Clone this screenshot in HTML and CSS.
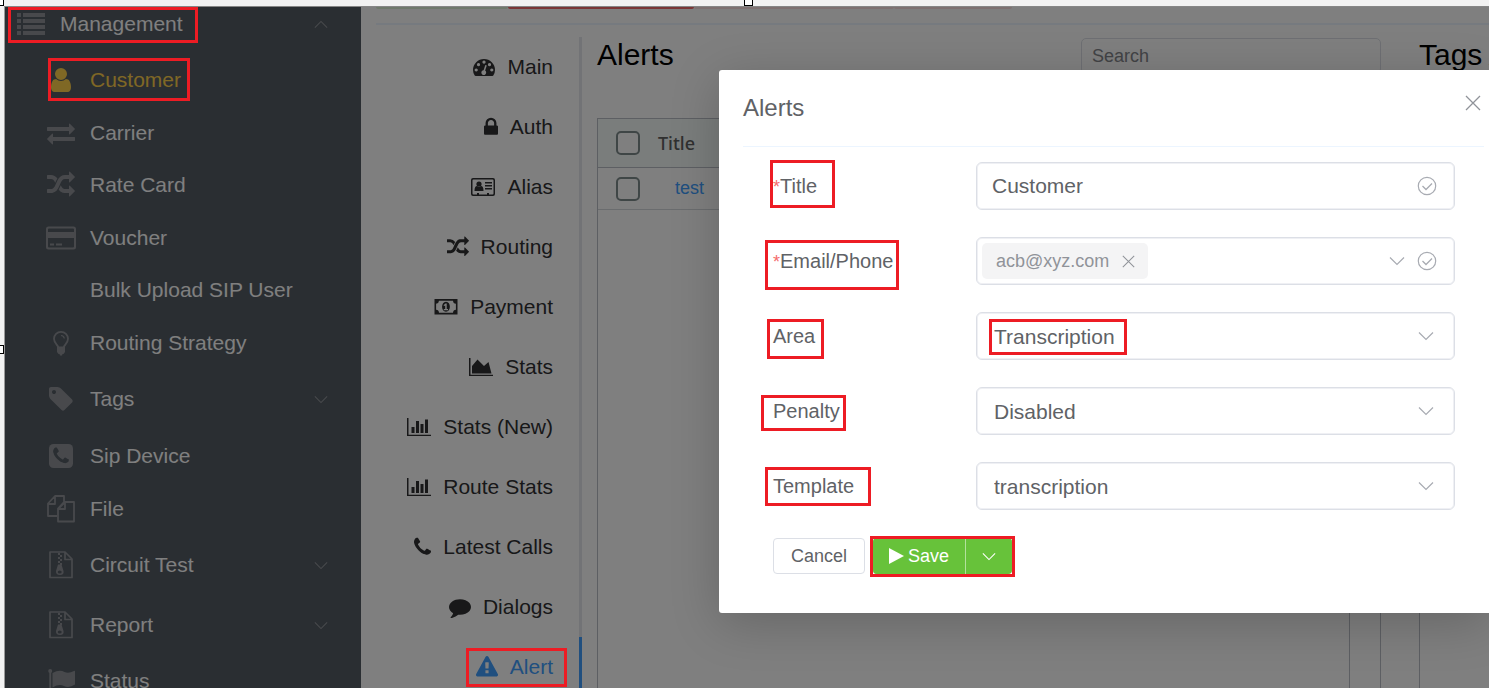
FILE: index.html
```html
<!DOCTYPE html>
<html lang="en">
<head>
<meta charset="utf-8">
<title>Alerts</title>
<link rel="stylesheet" href="styles.css">
</head>
<body>
<svg class="sprite" aria-hidden="true">
  <symbol id="i-list" viewBox="0 0 28 28"><path d="M0 3h4v4H0zM6 3h22v4H6zM0 9h4v4H0zM6 9h22v4H6zM0 15h4v4H0zM6 15h22v4H6zM0 21h4v4H0zM6 21h22v4H6z"/></symbol>
  <symbol id="i-user" viewBox="0 0 1792 1792"><path d="M1536 1399q0 109-62.500 187t-150.500 78h-854q-88 0-150.500-78t-62.500-187q0-85 8.500-160.500t31.500-152 58.500-131 94-89 134.500-34.500q131 128 313 128t313-128q76 0 134.500 34.500t94 89 58.500 131 31.500 152 8.500 160.500zm-256-887q0 159-112.500 271.500t-271.500 112.500-271.500-112.500-112.500-271.500 112.500-271.500 271.500-112.500 271.500 112.500 112.500 271.500z"/></symbol>
  <symbol id="i-exchange" viewBox="0 0 1792 1792"><path d="M1792 1184v192q0 13-9.500 22.500t-22.500 9.500h-1376v192q0 13-9.500 22.500t-22.500 9.500q-12 0-24-10l-319-320q-9-9-9-22 0-14 9-23l320-320q9-9 23-9 13 0 22.500 9.500t9.500 22.500v192h1376q13 0 22.500 9.500t9.500 22.500zm0-544q0 14-9 23l-320 320q-9 9-23 9-13 0-22.500-9.500t-9.500-22.500v-192h-1376q-13 0-22.500-9.500t-9.500-22.500v-192q0-13 9.500-22.500t22.500-9.500h1376v-192q0-14 9-23t23-9q12 0 24 10l319 319q9 9 9 23z"/></symbol>
  <symbol id="i-random" viewBox="0 0 1792 1792"><path d="M666 481q-60 92-137 273-22-45-37-72.500t-40.500-63.500-51-56.500-63-35-81.500-14.500h-224q-14 0-23-9t-9-23v-192q0-14 9-23t23-9h224q250 0 410 225zm1126 799q0 14-9 23l-320 320q-9 9-23 9-13 0-22.500-9.500t-9.500-22.500v-192q-32 0-85 .5t-81 1-73-1-71-5-64-10.500-63-18.500-58-28.500-59-40-55-53.500-56-69.500q59-93 136-273 22 45 37 72.500t40.500 63.500 51 56.500 63 35 81.500 14.500h256v-192q0-14 9-23t23-9q12 0 24 10l319 319q9 9 9 23zm0-896q0 14-9 23l-320 320q-9 9-23 9-13 0-22.500-9.500t-9.500-22.500v-192h-256q-48 0-87 15t-69 45-51 61.500-45 77.500q-32 62-78 171-29 66-49.500 111t-54 105-64 100-74 83-90 68.500-106.500 42-128 16.500h-224q-14 0-23-9t-9-23v-192q0-14 9-23t23-9h224q48 0 87-15t69-45 51-61.500 45-77.500q32-62 78-171 29-66 49.500-111t54-105 64-100 74-83 90-68.500 106.500-42 128-16.500h256v-192q0-14 9-23t23-9q12 0 24 10l319 319q9 9 9 23z"/></symbol>
  <symbol id="i-card" viewBox="0 0 30 28"><path fill-rule="evenodd" d="M2.500 2.500h25a2.500 2.500 0 0 1 2.500 2.500v18a2.500 2.500 0 0 1-2.500 2.500h-25A2.500 2.500 0 0 1 0 23V5a2.500 2.500 0 0 1 2.500-2.500zM2 5.500V8h26V5.500q0-1-1-1H3q-1 0-1 1zM2 14v8.500q0 1 1 1h24q1 0 1-1V14zM4 19.500h4v2H4zM10 19.500h6v2h-6z"/></symbol>
  <symbol id="i-bulb" viewBox="0 0 28 28"><path fill="none" stroke="currentColor" stroke-width="1.800" d="M11.300 18.500c-.3-2.500-4.300-4-4.300-8.700a7 7 0 0 1 14 0c0 4.700-4 6.200-4.300 8.700"/><path fill="none" stroke="currentColor" stroke-width="1.200" d="M14 6.500q3 .3 3.300 3"/><path d="M10 17.500h8V23l-1.500 2H15.500L15 26.500h-2L12.500 25h-1L10 23z"/></symbol>
  <symbol id="i-tag" viewBox="0 0 1792 1792"><path d="M576 448q0-53-37.500-90.500t-90.500-37.500-90.500 37.500-37.500 90.500 37.500 90.500 90.500 37.500 90.500-37.500 37.500-90.500zm1067 576q0 53-37 90l-491 492q-39 37-91 37-53 0-90-37l-715-716q-38-37-64.500-101t-26.500-117v-416q0-52 38-90t90-38h416q53 0 117 26.500t102 64.500l715 714q37 39 37 91z"/></symbol>
  <symbol id="i-phone" viewBox="192 0 1408 1792"><path d="M1600 1240q0 27-10 70.500t-21 68.500q-21 50-122 106-94 51-186 51-27 0-52.500-3.500t-57.500-12.500-47.500-14.500-55.500-20.500-49-18q-98-35-175-83-128-79-264.500-215.500t-215.500-264.500q-48-77-83-175-3-9-18-49t-20.500-55.500-14.500-47.500-12.500-57.500-3.500-52.500q0-92 51-186 56-101 106-122 25-11 68.500-21t70.500-10q14 0 21 3 18 6 53 76 11 19 30 54t35 63.500 31 53.500q3 4 17.500 25t21.500 35.500 7 28.500q0 20-28.500 50t-62 55-62 53-28.500 46q0 9 5 22.500t8.500 20.500 14 24 11.500 19q76 137 174 235t235 174q2 1 19 11.500t24 14 20.500 8.500 22.500 5q18 0 46-28.500t53-62 55-62 50-28.500q14 0 28.500 7t35.500 21.500 25 17.500q25 15 53.500 31t63.500 35 54 30q70 35 76 53 3 7 3 21z"/></symbol>
  <symbol id="i-phone-square" viewBox="0 0 28 28"><mask id="phone-cut"><path fill="#fff" d="M0 0h28v28H0z"/><use href="#i-phone" x="6" y="4" width="16" height="20" color="#000" fill="#000"/></mask><rect x="2" y="2" width="24" height="24" rx="4.500" mask="url(#phone-cut)"/></symbol>
  <symbol id="i-files" viewBox="0 0 28 28"><path fill="none" stroke="currentColor" stroke-width="1.800" stroke-linejoin="round" d="M10 21H1V8.500L8 1h9v6M8 1v8H1M18 7h9v19.500H11V14zM18 7v7h-7M11 14v-.5L17 7"/></symbol>
  <symbol id="i-zip" viewBox="0 0 28 28"><path fill="none" stroke="currentColor" stroke-width="1.700" stroke-linejoin="round" d="M3 1h15l7 7v18.500H3zM18 1v7.500h7"/><path d="M11 2h2v2h-2zM13 4h2v2h-2zM11 6h2v2h-2zM13 8h2v2h-2zM11 10h2v2h-2zM13 12h2v2h-2z"/><path fill-rule="evenodd" d="M11 13.500h3.500l2 6.500q.8 4-3.500 4t-4-4zM12.700 19.500q-2 0-2 1.500t2 1.500 2-1.500-2-1.500z"/></symbol>
  <symbol id="i-flag" viewBox="0 0 28 28"><circle cx="3.200" cy="4" r="2"/><path d="M2.300 4h1.900v24H2.300zM5.500 6q7-4 12-1 4 2 9.500-1 1-.5 1 .5v13q-6 4-11 1.500-5-2.500-11.500 1.500z"/></symbol>
  <symbol id="i-down" viewBox="0 0 16 10"><path fill="none" stroke="currentColor" stroke-width="1.200" d="M1 1.500l7 7 7-7"/></symbol>
  <symbol id="i-gauge" viewBox="0 0 22 22"><path fill-rule="evenodd" d="M11 3A11 11 0 0 1 22 14q0 3-1.700 5.600-.3.400-.9.400H2.600q-.6 0-.9-.4Q0 17 0 14A11 11 0 0 1 11 3zM3.200 12.400a1.600 1.600 0 1 0 .01 0zM5.500 7a1.600 1.600 0 1 0 .01 0zM11 4.500a1.600 1.600 0 1 0 .01 0zM16.500 7a1.600 1.600 0 1 0 .01 0zM18.800 12.400a1.600 1.600 0 1 0 .01 0zM12.300 9l-1.700 5.200a2.400 2.400 0 1 0 1.500.4L13.800 9.400z"/></symbol>
  <symbol id="i-lock" viewBox="320 0 1152 1792"><path d="M640 768h512v-192q0-106-75-181t-181-75-181 75-75 181v192zm832 96v576q0 40-28 68t-68 28h-960q-40 0-68-28t-28-68v-576q0-40 28-68t68-28h32v-192q0-184 132-316t316-132 316 132 132 316v192h32q40 0 68 28t28 68z"/></symbol>
  <symbol id="i-idcard" viewBox="0 0 24 22"><path fill-rule="evenodd" d="M2 2h20q2 0 2 2v14q0 2-2 2H2q-2 0-2-2V4q0-2 2-2zM1.500 4.500v13q0 1 1 1H6V17h2v1.500h8V17h2v1.500h3.500q1 0 1-1v-13q0-1-1-1h-19q-1 0-1 1z"/><circle cx="8" cy="8" r="2.600"/><path d="M3.500 15q0-5 2.500-5 2 1.500 4 0 2.500 0 2.500 5zM14 6h7v1.400h-7zM14 9h7v1.400h-7zM14 12h7v1.400h-7z"/></symbol>
  <symbol id="i-money" viewBox="0 0 23 22"><path fill-rule="evenodd" d="M0 3h23v15.500H0zM4.500 4.700Q4.300 7.500 1.600 7.800v6q2.700.2 2.900 3h14q.2-2.800 2.900-3v-6q-2.700-.3-2.900-3.100z"/><path fill-rule="evenodd" d="M11.500 5.700c5.200 0 5.200 10 0 10s-5.200-10 0-10zM11 7.500L9 9.200l.8.900.9-.7v3.600H9.300v1.200h4.200V13h-1.300V7.500z"/></symbol>
  <symbol id="i-area" viewBox="0 0 24 22"><path d="M0 2h1.500v16.700H24V20H0zM3 17.500V10l5.500-6.500L15 10l4.500-4 3 11.500z"/></symbol>
  <symbol id="i-bars" viewBox="0 0 24 22"><path d="M0 2h1.500v16.700H24V20H0zM4.500 11h3v6h-3zM9 5h3v12H9zM13.500 8h3v9h-3zM18 3.500h3V17h-3z"/></symbol>
  <symbol id="i-comment" viewBox="0 0 1792 1792"><path d="M1792 896q0 174-120 321.500t-326 233-450 85.500q-70 0-145-8-198 175-460 242-49 14-114 22-17 2-30.500-9t-17.500-29v-1q-3-4-.5-12t2-10 4.500-9.500l6-9 7-8.500 8-9q7-8 31-34.500t34.500-38 31-39.500 32.500-51 27-59 26-76q-157-89-247.500-220t-90.500-281q0-130 71-248.500t191-204.500 286-136.500 348-50.500q244 0 450 85.500t326 233 120 321.500z"/></symbol>
  <symbol id="i-warning" viewBox="0 0 1792 1792"><path fill-rule="evenodd" d="M1024 1375v-190q0-14-9.500-23.500t-22.500-9.500h-192q-13 0-22.500 9.500t-9.500 23.500v190q0 14 9.500 23.500t22.500 9.500h192q13 0 22.500-9.500t9.500-23.500zm-2-374l18-459q0-12-10-19-13-11-24-11h-220q-11 0-24 11-10 7-10 21l17 457q0 10 10 16.500t24 6.500h185q14 0 23.500-6.500t10.500-16.500zm-14-934l768 1408q35 63-2 126-17 29-46.500 46t-63.500 17h-1536q-34 0-63.500-17t-46.500-46q-37-63-2-126l768-1408q17-31 47-49t65-18 65 18 47 49z"/></symbol>
  <symbol id="i-close" viewBox="0 0 16 16"><path fill="none" stroke="currentColor" stroke-width="1.300" d="M1 1l14 14M15 1L1 15"/></symbol>
  <symbol id="i-check" viewBox="0 0 20 20"><circle cx="10" cy="10" r="8.700" fill="none" stroke="currentColor" stroke-width="1.200"/><path fill="none" stroke="currentColor" stroke-width="1.300" d="M5.500 10l3.500 3.500 6-6"/></symbol>
</svg>

<div class="desk">
  <div class="window">
    <nav class="sidebar" aria-label="Management">
      <a class="side-item group head" href="#"><svg class="side-icon"><use href="#i-list"/></svg><span>Management</span><svg class="side-caret up"><use href="#i-down"/></svg></a>
      <a class="side-item current" href="#"><svg class="side-icon"><use href="#i-user"/></svg><span>Customer</span></a>
      <a class="side-item tall" href="#"><svg class="side-icon"><use href="#i-exchange"/></svg><span>Carrier</span></a>
      <a class="side-item" href="#"><svg class="side-icon"><use href="#i-random"/></svg><span>Rate Card</span></a>
      <a class="side-item tall" href="#"><svg class="side-icon"><use href="#i-card"/></svg><span>Voucher</span></a>
      <a class="side-item" href="#"><svg class="side-icon"></svg><span>Bulk Upload SIP User</span></a>
      <a class="side-item tall" href="#"><svg class="side-icon"><use href="#i-bulb"/></svg><span>Routing Strategy</span></a>
      <a class="side-item group" href="#"><svg class="side-icon"><use href="#i-tag"/></svg><span>Tags</span><svg class="side-caret"><use href="#i-down"/></svg></a>
      <a class="side-item tall" href="#"><svg class="side-icon"><use href="#i-phone-square"/></svg><span>Sip Device</span></a>
      <a class="side-item tall" href="#"><svg class="side-icon"><use href="#i-files"/></svg><span>File</span></a>
      <a class="side-item group" href="#"><svg class="side-icon"><use href="#i-zip"/></svg><span>Circuit Test</span><svg class="side-caret"><use href="#i-down"/></svg></a>
      <a class="side-item group" href="#"><svg class="side-icon"><use href="#i-zip"/></svg><span>Report</span><svg class="side-caret"><use href="#i-down"/></svg></a>
      <a class="side-item" href="#"><svg class="side-icon"><use href="#i-flag"/></svg><span>Status</span></a>
    </nav>

    <main class="content">
      <div class="chips"><i class="chip green"></i><i class="chip red"></i><i class="chip pink"></i><i class="chip pink short"></i></div>
      <div class="workspace">
        <nav class="tabs" aria-label="Customer sections">
          <a class="tab" href="#"><svg class="w22"><use href="#i-gauge"/></svg>Main</a>
          <a class="tab" href="#"><svg class="w14"><use href="#i-lock"/></svg>Auth</a>
          <a class="tab" href="#"><svg class="w24"><use href="#i-idcard"/></svg>Alias</a>
          <a class="tab" href="#"><svg class="w22"><use href="#i-random"/></svg>Routing</a>
          <a class="tab" href="#"><svg class="w24"><use href="#i-money"/></svg>Payment</a>
          <a class="tab" href="#"><svg class="w24"><use href="#i-area"/></svg>Stats</a>
          <a class="tab" href="#"><svg class="w24"><use href="#i-bars"/></svg>Stats (New)</a>
          <a class="tab" href="#"><svg class="w24"><use href="#i-bars"/></svg>Route Stats</a>
          <a class="tab" href="#"><svg class="w17"><use href="#i-phone"/></svg>Latest Calls</a>
          <a class="tab" href="#"><svg class="w22"><use href="#i-comment"/></svg>Dialogs</a>
          <a class="tab active" href="#"><svg class="w22"><use href="#i-warning"/></svg>Alert</a>
        </nav>
        <section class="panel">
          <header class="panel-head">
            <h1>Alerts</h1>
            <input class="search" type="search" placeholder="Search" aria-label="Search">
          </header>
          <div class="grid">
            <table class="list">
              <thead><tr><th class="pick"><input type="checkbox" aria-label="Select all"></th><th>Title</th></tr></thead>
              <tbody><tr><td class="pick"><input type="checkbox" aria-label="Select test"></td><td class="name"><a href="#">test</a></td></tr></tbody>
            </table>
          </div>
        </section>
        <section class="panel side-panel">
          <header class="panel-head"><h1>Tags A</h1></header>
          <div class="grid"></div>
        </section>
      </div>
    </main>

    <div class="overlay">
      <div class="dialog" role="dialog" aria-labelledby="dialog-title">
        <header class="dialog-head">
          <h2 id="dialog-title">Alerts</h2>
          <button class="close" type="button" aria-label="Close"><svg><use href="#i-close"/></svg></button>
        </header>
        <form class="form">
          <div class="row">
            <label for="f-title"><b>*</b>Title</label>
            <div class="field"><input id="f-title" type="text" value="Customer"><svg class="check"><use href="#i-check"/></svg></div>
          </div>
          <div class="row">
            <label for="f-email"><b>*</b>Email/Phone</label>
            <div class="field with-tag"><span class="token">acb@xyz.com<button type="button" aria-label="Remove"><svg><use href="#i-close"/></svg></button></span><input id="f-email" type="text"><svg class="caret"><use href="#i-down"/></svg><svg class="check"><use href="#i-check"/></svg></div>
          </div>
          <div class="row">
            <label for="f-area">Area</label>
            <div class="field"><select id="f-area"><option>Transcription</option></select><svg class="caret"><use href="#i-down"/></svg></div>
          </div>
          <div class="row">
            <label for="f-penalty">Penalty</label>
            <div class="field"><select id="f-penalty"><option>Disabled</option></select><svg class="caret"><use href="#i-down"/></svg></div>
          </div>
          <div class="row">
            <label for="f-template">Template</label>
            <div class="field"><select id="f-template"><option>transcription</option></select><svg class="caret"><use href="#i-down"/></svg></div>
          </div>
          <div class="actions">
            <button class="cancel" type="button">Cancel</button>
            <div class="split">
              <button class="save" type="button"><svg viewBox="0 0 15 16"><path d="M0 0l15 8-15 8z"/></svg>Save</button>
              <button class="more" type="button" aria-label="More save options"><svg><use href="#i-down"/></svg></button>
            </div>
          </div>
        </form>
      </div>
    </div>
  </div>

  <div class="marks" aria-hidden="true">
    <i class="mark m-management"></i><i class="mark m-customer"></i><i class="mark m-alert"></i>
    <i class="mark m-title"></i><i class="mark m-email"></i><i class="mark m-area"></i><i class="mark m-transcription"></i>
    <i class="mark m-penalty"></i><i class="mark m-template"></i><i class="mark m-save"></i>
    <i class="handle h-corner"></i><i class="handle h-top"></i><i class="handle h-left"></i>
  </div>
</div>
</body>
</html>
```

FILE: styles.css
```css
* { box-sizing: border-box; }

body {
  margin: 0;
  font-family: "Liberation Sans", Arial, sans-serif;
  color: #303133;
}

a { color: inherit; text-decoration: none; }
h1, h2 { margin: 0; font-weight: 400; }
svg { flex: none; fill: currentColor; overflow: visible; }
button, input, select { font-family: inherit; }
.sprite { position: absolute; width: 0; height: 0; }

.desk {
  position: relative;
  display: flex;
  height: 100vh;
  overflow: hidden;
  padding: 6px 0 0 4px;
  background: #f2f2f2;
}

.window {
  position: relative;
  display: flex;
  flex: 1;
  min-width: 0;
  overflow: hidden;
  border-top: 1px solid #868686;
  border-left: 1px solid #9a9a9a;
  background: #fff;
}

/* Sidebar */
.sidebar {
  flex: none;
  width: 356px;
  overflow: hidden;
  background: #545c64;
  color: #fff;
  font-size: 21px;
}

.side-item {
  display: flex;
  align-items: center;
  gap: 14px;
  height: 52px;
  padding: 0 33px 0 41px;
}

.side-item.tall { height: 53px; }
.side-item.group { height: 60px; }
.side-item.head { height: 47px; padding: 0 33px 13px 11px; }
.side-item.current, .side-item.current .side-icon { color: #ffd04b; }
.side-icon { width: 30px; height: 28px; color: #909399; }
.side-caret { width: 14px; height: 9px; margin-left: auto; color: #909399; }
.side-caret.up { transform: rotate(180deg); }

/* Content */
.content {
  display: flex;
  flex-direction: column;
  flex: 1;
  min-width: 0;
  padding-left: 15px;
}

.chips {
  display: flex;
  height: 18px;
  padding-bottom: 14px;
  border-bottom: 2px solid #ecf5ff;
}

.chip { width: 200px; border-radius: 0 0 5px 5px; }
.chip.green { width: 132px; background: #e1f3d8; }
.chip.red { width: 186px; background: #f56c6c; }
.chip.pink { background: #fde2e2; }
.chip.short { width: 118px; }

.workspace { display: flex; flex: 1; min-height: 0; padding-top: 12px; }

.tabs { flex: none; width: 206px; font-size: 21px; }

.tab {
  display: flex;
  align-items: center;
  justify-content: flex-end;
  gap: 12px;
  height: 60px;
  padding-right: 26px;
  border-right: 3px solid #e4e7ed;
}

.tab.active { color: #409eff; border-color: #409eff; }
.tab svg { height: 22px; }
.w14 { width: 14px; }
.w17 { width: 17px; }
.w22 { width: 22px; }
.w24 { width: 24px; }

.panel {
  display: flex;
  flex-direction: column;
  flex: 1;
  min-width: 0;
  margin-left: 15px;
}

.panel.side-panel { flex: 0 0 70px; margin-left: 38px; white-space: nowrap; }

.panel-head {
  display: flex;
  justify-content: space-between;
  height: 81px;
  color: #000;
}

.panel-head h1 { font-size: 30px; line-height: 36px; }

.search {
  width: 300px;
  height: 36px;
  margin-top: 1px;
  padding: 0 10px;
  border: 1px solid #dcdfe6;
  border-radius: 5px;
  background: #fff;
  font-size: 18px;
}

.search::placeholder { color: #85878c; }

.grid {
  flex: 1;
  padding-right: 30px;
  border: 1px solid #babfc7;
  border-bottom: 0;
}

.side-panel .grid { border-right: 0; }

.list {
  display: block;
  width: 100%;
  height: 100%;
  border-right: 1px solid #babfc7;
  border-spacing: 0;
}

.list thead, .list tbody { display: block; }
.list tr { display: flex; align-items: center; height: 42px; border-bottom: 1px solid #d4d8dd; }
.list thead tr { height: 49px; border-color: #babfc7; background: #f4faf8; }
.list th, .list td { padding: 0; font-size: 18px; }
.list th { color: #606060; font: 500 18px "Noto Sans", sans-serif; }
.list .pick { display: flex; width: 60px; padding-left: 18px; }
.list .name { padding-left: 17px; color: #409eff; }

.list input {
  appearance: none;
  width: 24px;
  height: 24px;
  margin: 0;
  border: 2px solid #7f8c8d;
  border-radius: 5px;
  background: #fff;
}

/* Dialog */
.overlay {
  position: absolute;
  inset: 0;
  display: flex;
  align-items: flex-start;
  padding: 63px 0 0 714px;
  background: rgba(0, 0, 0, 0.5);
}

.dialog {
  flex: 1;
  min-width: 0;
  padding: 0 5px 39px 24px;
  border-radius: 3px 0 0 3px;
  background: #fff;
  box-shadow: 0 10px 50px rgba(0, 0, 0, 0.2);
  color: #606266;
}

.dialog-head {
  display: flex;
  justify-content: space-between;
  height: 77px;
  padding: 24px 3px 0 0;
  border-bottom: 1px solid #ecf5ff;
}

.dialog-head h2 { font-size: 24px; line-height: 28px; }

.close {
  display: flex;
  align-self: flex-start;
  padding: 1px 0;
  border: 0;
  background: none;
  color: #909399;
}

.close svg { width: 16px; height: 16px; }

.form {
  display: flex;
  flex-direction: column;
  gap: 27px;
  padding: 15px 29px 0 30px;
}

.row { display: flex; align-items: center; }
.row label { flex: none; width: 203px; font-size: 20px; }
.row label b { color: #f56c6c; font-size: 18px; font-weight: 400; }

.field {
  display: flex;
  align-items: center;
  gap: 12px;
  flex: 1;
  min-width: 0;
  height: 48px;
  padding-right: 17px;
  border: 1px solid #dcdfe6;
  border-radius: 6px;
  box-shadow: inset 0 0 0 1px #eff0f4;
  color: #a8abb2;
}

.field input, .field select {
  flex: 1;
  min-width: 0;
  align-self: stretch;
  padding: 0 0 0 15px;
  border: 0;
  outline: 0;
  background: none;
  color: #606266;
  font-size: 21px;
}

.field select { appearance: none; padding-left: 17px; }
.field .caret { width: 16px; height: 10px; margin-right: 3px; }
.with-tag .caret { margin-right: 0; }
.field .check { width: 20px; height: 20px; }

.token {
  display: flex;
  align-items: center;
  gap: 13px;
  height: 36px;
  margin-left: 5px;
  padding: 0 13px 0 14px;
  border-radius: 5px;
  background: #f4f4f5;
  color: #909399;
  font-size: 18px;
}

.token button { display: flex; padding: 0; border: 0; background: none; color: inherit; }
.token svg { width: 13px; height: 13px; }

.actions { display: flex; gap: 8px; padding-top: 1px; }

.actions button {
  display: flex;
  align-items: center;
  justify-content: center;
  height: 36px;
  border: 0;
  font-size: 18px;
}

.actions .cancel {
  padding: 0 17px;
  border: 1px solid #dcdfe6;
  border-radius: 4px;
  background: #fff;
  color: #606266;
}

.split { display: flex; gap: 1px; background: #b3e19d; border-radius: 4px; }
.split button { background: #67c23a; color: #fff; }
.split .save { gap: 4px; padding: 0 16px; border-radius: 4px 0 0 4px; }
.split .save svg { width: 15px; height: 16px; }
.split .more { width: 46px; border-radius: 0 4px 4px 0; }
.split .more svg { width: 14px; height: 9px; }

/* Highlight frames drawn over the window */
.marks { position: absolute; inset: 0; pointer-events: none; }
.mark { position: absolute; border: 3px solid #ed1c24; }
.m-management { left: 8px; top: 7px; width: 190px; height: 36px; }
.m-customer { left: 48px; top: 58px; width: 142px; height: 43px; }
.m-alert { left: 466px; top: 648px; width: 101px; height: 39px; }
.m-title { left: 770px; top: 160px; width: 65px; height: 48px; }
.m-email { left: 765px; top: 240px; width: 134px; height: 50px; }
.m-area { left: 767px; top: 319px; width: 57px; height: 40px; }
.m-transcription { left: 989px; top: 319px; width: 138px; height: 36px; }
.m-penalty { left: 761px; top: 395px; width: 85px; height: 36px; }
.m-template { left: 765px; top: 467px; width: 106px; height: 39px; }
.m-save { left: 870px; top: 536px; width: 145px; height: 41px; }

.handle { position: absolute; width: 9px; height: 9px; border: 1px solid #000; background: #fff; }
.h-corner { left: -5px; top: -3px; }
.h-top { left: 744px; top: -3px; }
.h-left { left: -5px; top: 345px; }
```
